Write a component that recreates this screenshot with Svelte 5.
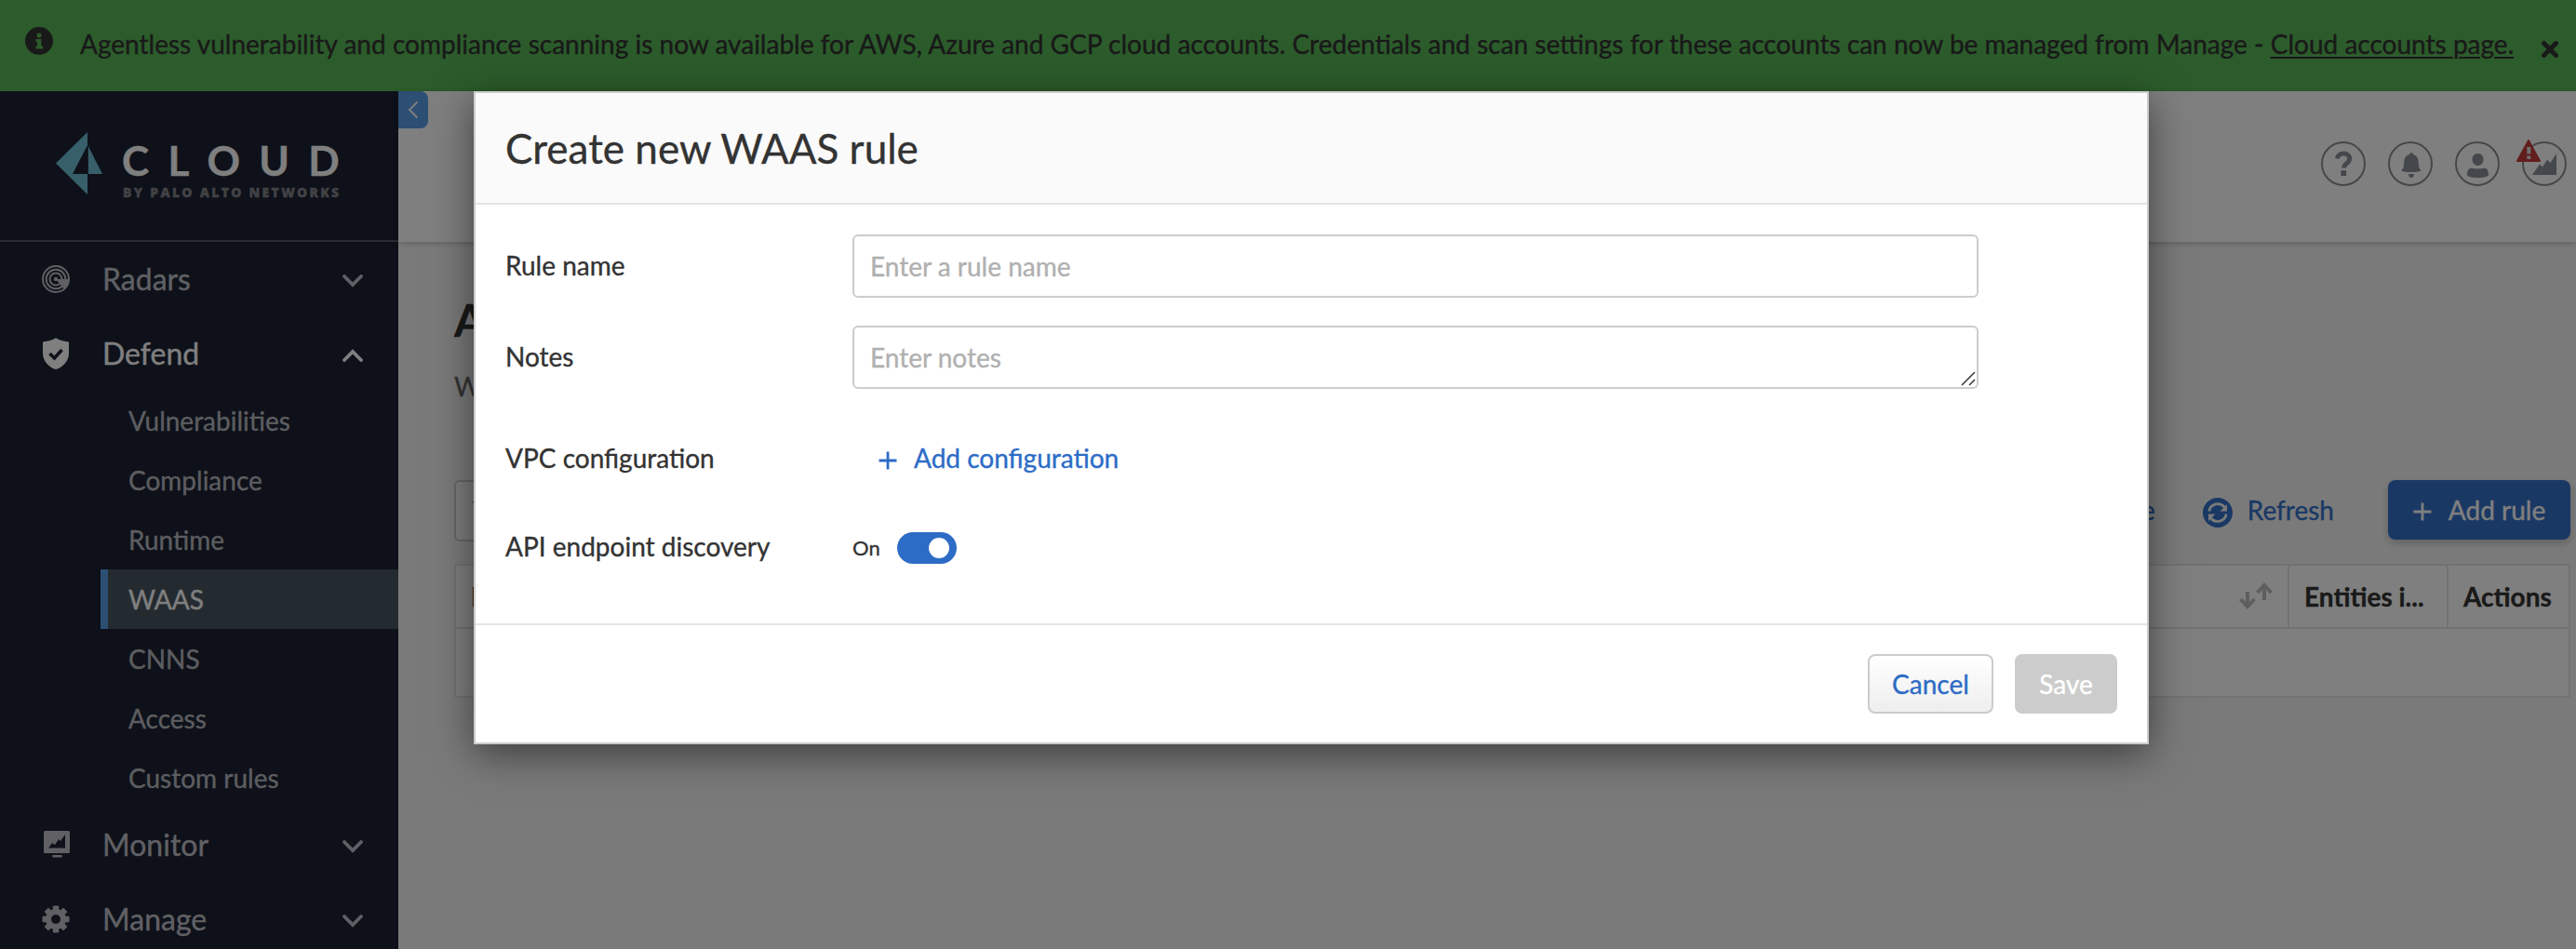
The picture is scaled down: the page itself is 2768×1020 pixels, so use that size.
<script>
  const subs = ['Vulnerabilities', 'Compliance', 'Runtime', 'WAAS', 'CNNS', 'Access', 'Custom rules'];
</script>

{#snippet chevron(up)}
  <svg class="chev" class:up width="22" height="14" viewBox="0 0 22 14"><path d="M2 2l9 9 9-9" fill="none" stroke="currentColor" stroke-width="3.800" stroke-linecap="round" /></svg>
{/snippet}

<div class="screen">
  <div class="banner">
    <svg class="info" width="30" height="30" viewBox="0 0 30 30"><circle cx="15" cy="15" r="15" fill="#333" /><circle cx="15" cy="9" r="2.500" fill="#58b856" /><path fill="#58b856" d="M11.500 13h5.800v7.500h1.700v3.100h-7.500v-3.100h1.700v-4.400h-1.700z" /></svg>
    <p>Agentless vulnerability and compliance scanning is now available for AWS, Azure and GCP cloud accounts. Credentials and scan settings for these accounts can now be managed from Manage - <span class="link">Cloud accounts page.</span></p>
    <svg class="close" width="18" height="18" viewBox="0 0 18 18"><path d="M2.500 2.500l13 13M15.500 2.500l-13 13" stroke="#333" stroke-width="5" stroke-linecap="square" /></svg>
  </div>
  <div class="body">
    <nav>
      <div class="logo">
        <svg width="50" height="68" viewBox="0 0 50 68"><path fill="#6fbfd4" fill-rule="evenodd" d="M0 33.500L34 0v67zM34 14L18 45h16z" /><path fill="#6fbfd4" d="M34.800 15L50 45H34.800z" /></svg>
        <div class="brand"><div class="cloud">CLOUD</div><div class="by">BY PALO ALTO NETWORKS</div></div>
      </div>
      <div class="item">
        <svg width="30" height="30" viewBox="0 0 30 30" fill="none" stroke="currentColor" stroke-width="2"><circle cx="15" cy="15" r="14" /><circle cx="15" cy="15" r="10.300" /><circle cx="15" cy="15" r="6.500" /><path d="M15 15L28.500 15A14 14 0 0 1 24 26z" fill="currentColor" stroke="none" /><circle cx="15" cy="15" r="2.200" fill="currentColor" stroke="none" /></svg>
        <span>Radars</span>{@render chevron(false)}
      </div>
      <div class="item on">
        <svg width="30" height="34" viewBox="0 0 30 34"><path fill="currentColor" d="M15 0c2 2 9 4 14 4.500v12C29 25 23 31.500 15 34 7 31.500 1 25 1 16.500v-12C6 4 13 2 15 0z" /><path d="M8.500 17l5 5 8-9" fill="none" stroke="#1c2232" stroke-width="3.500" /></svg>
        <span>Defend</span>{@render chevron(true)}
      </div>
      {#each subs as s}
        <div class="sub" class:active={s === 'WAAS'}>{s}</div>
      {/each}
      <div class="item">
        <svg class="mon" width="30" height="30" viewBox="0 0 30 30"><path fill="currentColor" fill-rule="evenodd" d="M2.500 1h25a1.500 1.500 0 0 1 1.500 1.500v21a1.500 1.500 0 0 1-1.500 1.500h-25A1.500 1.500 0 0 1 1 23.500v-21A1.500 1.500 0 0 1 2.500 1zM6 19.500h18V5l-5 7-2-2-4 6-3-2z" /><path fill="currentColor" d="M10.500 27h10v2.500h-10z" /></svg>
        <span>Monitor</span>{@render chevron(false)}
      </div>
      <div class="item">
        <svg width="30" height="30" viewBox="-15 -15 30 30"><g fill="currentColor">{#each [0, 45, 90, 135] as a}<rect x="-3.200" y="-14.500" width="6.400" height="29" rx="1" transform="rotate({a})" />{/each}<circle r="11" /></g><circle r="5" fill="#1c2232" /></svg>
        <span>Manage</span>{@render chevron(false)}
      </div>
    </nav>
    <main>
      <header>
        <div class="collapse"><svg width="12" height="20" viewBox="0 0 12 20"><path d="M10.500 1.500L2 10l8.500 8.500" fill="none" stroke="#fff" stroke-width="1.800" /></svg></div>
        <div class="tools">
          <svg width="48" height="48" viewBox="0 0 48 48"><circle cx="24" cy="24" r="23" /><path d="M17.500 18.500c.8-7.500 13.500-7 13.200.3-.2 4.700-6 4.600-6 9.700" stroke-width="5" /><path class="f" d="M21.400 31.200h5.700v5.800h-5.700z" /></svg>
          <svg width="48" height="48" viewBox="0 0 48 48"><circle cx="24" cy="24" r="23" /><path class="f" d="M23 14a2 2 0 0 1 4 0c4 1 5.700 4.500 5.700 8.500 0 5 1 6.500 3 9.300-5 1.600-16.500 1.600-21.500 0 2-2.800 3-4.300 3-9.300 0-4 1.800-7.500 5.800-8.500zM22 35h6c0 5.300-6 5.300-6 0z" /></svg>
          <svg width="48" height="48" viewBox="0 0 48 48"><circle cx="24" cy="24" r="23" /><path class="f" d="M24.500 13c4 0 6 3 6 6.500s-2.300 6.500-6 6.500-6-3-6-6.500 2-6.500 6-6.500zM18 28.500c3 1.200 10 1.200 13 0 3.500 0 5 2.800 5 8-3 3.500-20 3.500-23 0 0-5.200 1.500-8 5-8z" /></svg>
          <div class="alerting">
            <svg width="48" height="48" viewBox="0 0 48 48"><circle cx="24" cy="24" r="23" /><path class="f" d="M37 13v23H11l8-11.500 3 3 5-8 3.500 3.500z" /></svg>
            <svg class="alert" width="28" height="26" viewBox="0 0 28 26"><path d="M14 2L26 24H2z" stroke-width="2" stroke-linejoin="round" /><path d="M12.300 9h4v7.500h-4zM12.300 18.500h4v3.500h-4z" /></svg>
          </div>
        </div>
      </header>
      <section>
        <h1>App firewall</h1>
        <p class="desc">Web-application and API security</p>
        <div class="bar">
          <div class="filter"><svg width="24" height="24" viewBox="0 0 24 24"><path fill="#888" d="M1 1h22l-8 10v11l-6-4v-7z" /></svg></div>
          <div class="acts">
            <span class="more">More</span>
            <svg class="sync" width="32" height="32" viewBox="0 0 32 32"><circle cx="16" cy="16" r="16" fill="#3470c8" /><g fill="none" stroke="#f5f5f5" stroke-width="2.800"><path d="M6.800 14.500a9.400 9.400 0 0 1 16.500-4.500M25.200 17.500a9.400 9.400 0 0 1-16.500 4.500" /></g><path fill="#f5f5f5" d="M26 7v7.500h-7.500zM6 25v-7.500h7.500z" /></svg>
            <span class="refresh">Refresh</span>
            <div class="addrule"><svg width="20" height="20" viewBox="0 0 20 20"><path d="M10 .5v19M.5 10h19" stroke="#fff" stroke-width="2.800" /></svg>Add rule</div>
          </div>
        </div>
        <div class="table">
          <div class="th"><span>Rule name</span><svg width="38" height="30" viewBox="0 0 38 30" fill="none" stroke="#bdbdbd" stroke-width="4"><path d="M10 10v15M2.500 18l7.500 8 7.500-8M28 19V4M20.500 11L28 3l7.500 8" /></svg></div>
          <div class="th">Entities i...</div>
          <div class="th">Actions</div>
          <div class="empty"></div>
        </div>
      </section>
    </main>
  </div>
  <div class="backdrop">
    <div class="modal">
      <div class="mhead">Create new WAAS rule</div>
      <div class="mbody">
        <div class="field r1"><span class="lab">Rule name</span><div class="input">Enter a rule name</div></div>
        <div class="field r2"><span class="lab">Notes</span><div class="input">Enter notes<svg width="16" height="16" viewBox="0 0 16 16"><path d="M1 15L15 1M9 15l6-6" stroke="#444" stroke-width="1.700" /></svg></div></div>
        <div class="field r3"><span class="lab">VPC configuration</span><div class="addc"><svg width="20" height="20" viewBox="0 0 20 20"><path d="M10 .5v19M.5 10h19" stroke="#2d6cc6" stroke-width="2.800" /></svg><span>Add configuration</span></div></div>
        <div class="field r4"><span class="lab">API endpoint discovery</span><span class="onl">On</span><div class="toggle"></div></div>
      </div>
      <div class="mfoot"><div class="btn cancel">Cancel</div><div class="btn save">Save</div></div>
    </div>
  </div>
</div>

<style>
  .screen { position: relative; width: 2768px; height: 1020px; overflow: hidden; font-family: Lato, sans-serif; font-size: 28px; line-height: 34px; color: #333; display: flex; flex-direction: column; -webkit-text-stroke: 0.35px currentColor; }
  .screen * { box-sizing: border-box; }
  svg { display: block; flex: none; }
  .banner { height: 98px; flex: none; background: #58b856; display: flex; padding: 29px 19px 0 27px; }
  .banner p { margin: 1px 0 0 29px; white-space: nowrap; flex: 1; word-spacing: .07px; }
  .link { text-decoration: underline; text-decoration-thickness: 2px; text-underline-offset: 3px; }
  .close { margin-top: 15px; }
  .body { flex: 1; display: flex; min-height: 0; }
  nav { width: 428px; flex: none; background: #1c2232; color: #c0c1c8; }
  .logo { height: 162px; border-bottom: 2px solid #555966; display: flex; padding: 44px 0 0 60px; }
  .brand { margin-left: 21px; }
  .cloud { font-weight: 700; font-size: 44px; line-height: 44px; margin-top: 8px; letter-spacing: 20.300px; color: #fff; }
  .by { font-family: "Open Sans", sans-serif; font-weight: 800; font-size: 14px; line-height: 14px; letter-spacing: 2.300px; margin: 6px 0 0 1px; color: #84858a; white-space: nowrap; }
  .item { height: 80px; display: flex; align-items: center; padding: 0 38px 0 45px; font-size: 32px; }
  .item span { flex: 1; margin-left: 35px; }
  .mon { margin: -3px -1px 0 1px; }
  .chev { margin-top: 3px; }
  .on { color: #fff; }
  .up { transform: rotate(180deg); }
  .sub { height: 64px; margin-left: 108px; padding-left: 30px; line-height: 65px; color: #b9bac0; }
  .active { background: #495661; border-left: 8px solid #5a9ee8; padding-left: 22px; color: #fff; }
  main { flex: 1; min-width: 0; background: #f5f5f5; }
  header { height: 162px; background: #fff; display: flex; justify-content: space-between; box-shadow: 0 2px 6px rgba(0,0,0,.2); }
  .collapse { width: 32px; height: 40px; background: #5a9ee8; border-radius: 0 8px 8px 0; display: flex; align-items: center; justify-content: center; }
  .tools { display: flex; gap: 24px; padding: 54px 10px 0 0; }
  .tools circle, .tools path { fill: none; stroke: #888f96; stroke-width: 2; }
  .tools path[stroke-width="5"] { stroke-width: 5; }
  .tools path.f { fill: #888f96; stroke: none; }
  .alerting { position: relative; }
  .alert { position: absolute; left: -7px; top: -3px; }
  .tools .alert path { fill: #c43c38; stroke: #c43c38; }
  .tools .alert path + path { fill: #ddd; stroke: none; }
  section { padding: 54px 6px 0 60px; }
  h1 { margin: 0; font-size: 48px; line-height: 60px; font-weight: 700; }
  .desc { margin: 24px 0 0; color: #666; }
  .bar { display: flex; justify-content: space-between; margin-top: 84px; }
  .filter { width: 500px; height: 66px; border: 2px solid #ccc; border-radius: 6px; padding: 20px 16px; background: #fafafa; }
  .acts { display: flex; align-items: center; height: 64px; color: #3470c8; }
  .more { margin-right: 51px; }
  .sync { margin-top: 5px; }
  .refresh { margin: 0 58px 0 16px; }
  .addrule { width: 196px; height: 64px; background: #3470c8; color: #fff; border-radius: 8px; display: flex; align-items: center; justify-content: center; gap: 18px; box-shadow: 0 4px 8px rgba(0,0,0,.2); }
  .addrule svg { margin-top: 3px; }
  .table { margin-top: 24px; border: 2px solid #e4e4e4; background: #fff; display: grid; grid-template-columns: 1fr 171px 131px; font-weight: 700; }
  .th { height: 68px; border-bottom: 2px solid #e4e4e4; border-left: 2px solid #e4e4e4; padding-left: 16px; display: flex; align-items: center; justify-content: space-between; padding-right: 15px; white-space: nowrap; }
  .th:first-child { border-left: 0; padding-left: 16px; }
  .empty { height: 72px; grid-column: 1 / 4; }
  .backdrop { position: absolute; inset: 0; background: rgba(0,0,0,.5); padding: 98px 0 0 509px; }
  .modal { width: 1800px; height: 702px; background: #fff; border: 2px solid #ccc; box-shadow: 0 10px 40px rgba(0,0,0,.5); display: flex; flex-direction: column; }
  .mhead { height: 120px; background: #fafafa; border-bottom: 2px solid #e4e4e4; padding-left: 32px; font-size: 44px; line-height: 119px; }
  .mbody { flex: 1; padding: 32px; }
  .field { display: flex; align-items: center; height: 68px; }
  .lab { width: 373px; flex: none; padding-bottom: 3px; }
  .input { position: relative; width: 1210px; height: 68px; border: 2px solid #ccc; border-radius: 6px; color: #b0b0b0; line-height: 64px; padding-left: 17px; }
  .input svg { position: absolute; right: 1px; bottom: 1px; }
  .r2 { margin-top: 30px; }
  .r3 { margin-top: 41px; }
  .r4 { margin-top: 28px; }
  .addc { display: flex; align-items: center; gap: 18px; color: #2d6cc6; padding-left: 28px; }
  .addc svg { margin-top: 3px; }
  .addc span { padding-bottom: 3px; }
  .r4 .lab { padding-bottom: 4px; }
  .onl { font-size: 22px; width: 48px; padding-bottom: 1px; }
  .toggle { width: 64px; height: 34px; border-radius: 17px; background: #2d6cc6; display: flex; align-items: center; justify-content: flex-end; padding-right: 8px; }
  .toggle::after { content: ""; width: 22px; height: 22px; border-radius: 50%; background: #fff; }
  .mfoot { height: 128px; border-top: 2px solid #e4e4e4; display: flex; justify-content: flex-end; gap: 23px; padding: 31px 32px 0 0; }
  .btn { height: 64px; border-radius: 8px; line-height: 65px; text-align: center; }
  .cancel { width: 135px; border: 2px solid #ccc; background: linear-gradient(#fff, #eee); color: #2d6cc6; line-height: 61px; }
  .save { width: 110px; background: #ccc; color: #fff; }
</style>
